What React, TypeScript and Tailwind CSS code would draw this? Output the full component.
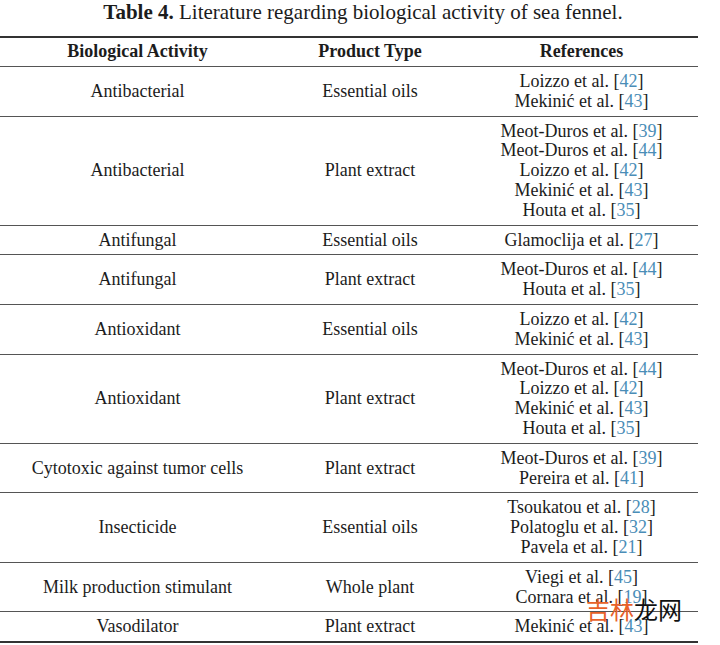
const rows: { activity: string; product: string; refs: [string, string][] }[] = [
  { activity: 'Antibacterial', product: 'Essential oils', refs: [['Loizzo et al.', '42'], ['Mekinić et al.', '43']] },
  {
    activity: 'Antibacterial',
    product: 'Plant extract',
    refs: [
      ['Meot-Duros et al.', '39'],
      ['Meot-Duros et al.', '44'],
      ['Loizzo et al.', '42'],
      ['Mekinić et al.', '43'],
      ['Houta et al.', '35'],
    ],
  },
  { activity: 'Antifungal', product: 'Essential oils', refs: [['Glamoclija et al.', '27']] },
  { activity: 'Antifungal', product: 'Plant extract', refs: [['Meot-Duros et al.', '44'], ['Houta et al.', '35']] },
  { activity: 'Antioxidant', product: 'Essential oils', refs: [['Loizzo et al.', '42'], ['Mekinić et al.', '43']] },
  {
    activity: 'Antioxidant',
    product: 'Plant extract',
    refs: [
      ['Meot-Duros et al.', '44'],
      ['Loizzo et al.', '42'],
      ['Mekinić et al.', '43'],
      ['Houta et al.', '35'],
    ],
  },
  { activity: 'Cytotoxic against tumor cells', product: 'Plant extract', refs: [['Meot-Duros et al.', '39'], ['Pereira et al.', '41']] },
  {
    activity: 'Insecticide',
    product: 'Essential oils',
    refs: [
      ['Tsoukatou et al.', '28'],
      ['Polatoglu et al.', '32'],
      ['Pavela et al.', '21'],
    ],
  },
  { activity: 'Milk production stimulant', product: 'Whole plant', refs: [['Viegi et al.', '45'], ['Cornara et al.', '19']] },
  { activity: 'Vasodilator', product: 'Plant extract', refs: [['Mekinić et al.', '43']] },
];

export default function App() {
  return (
    <div className="relative w-[720px] h-[645px] bg-white text-[#1c1c1c] [font-family:'Liberation_Serif',serif] overflow-hidden">
      <h1 className="text-center text-[21px] leading-[24px] ml-[6px]">
        <span className="font-bold">Table 4.</span> Literature regarding biological activity of sea fennel.
      </h1>

      <div className="mt-[12px] w-[698px] border-t-2 border-b-2 border-[#333] text-[18px] leading-[19.8px]">
        <div className="grid grid-cols-[275px_190px_1fr] border-b border-[#555] pt-[4px] pb-[4.2px] font-bold text-center">
          <div>Biological Activity</div>
          <div>Product Type</div>
          <div>References</div>
        </div>
        {rows.map((r, i) => (
          <div
            key={i}
            className={`grid grid-cols-[275px_190px_1fr] items-center text-center pt-[5px] pb-[4px] ${
              i < rows.length - 1 ? 'border-b border-[#555]' : ''
            }`}
          >
            <div>{r.activity}</div>
            <div>{r.product}</div>
            <div className="flex flex-col">
              {r.refs.map(([name, n], j) => (
                <span key={j}>
                  {name} [<span className="text-[#4a8db7]">{n}</span>]
                </span>
              ))}
            </div>
          </div>
        ))}
      </div>

      <div className="absolute left-[586px] top-[595px] text-[24px] leading-[28px] [font-family:'Noto_Sans_CJK_SC',sans-serif] flex">
        <span className="text-[#e8622a]">吉林</span>
        <span className="text-[#111]">龙网</span>
      </div>
    </div>
  );
}
